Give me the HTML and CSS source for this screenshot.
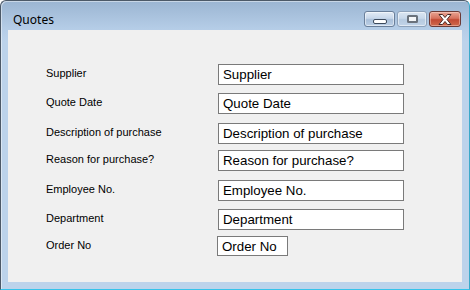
FILE: index.html
```html
<!DOCTYPE html>
<html>
<head>
<meta charset="utf-8">
<title>Quotes</title>
<link rel="stylesheet" href="styles.css">
</head>
<body>
<div class="window">
  <div class="titlebar">
    <span class="title">Quotes</span>
    <div class="caption-buttons">
      <div class="cbtn cbtn-min">
        <svg width="14" height="6" viewBox="0 0 14 6"><rect x="0.5" y="0.5" width="13" height="4" rx="1.5" fill="#fff" stroke="#3c4a5c"/></svg>
      </div>
      <div class="cbtn cbtn-max">
        <svg width="11" height="8" viewBox="0 0 11 8"><rect x="1" y="1" width="9" height="6" rx="0.5" fill="#f4f6f8" stroke="#6a727c" stroke-width="2"/></svg>
      </div>
      <div class="cbtn cbtn-close">
        <svg width="14" height="11" viewBox="0 0 14 11"><path d="M1 0.5 H4.5 L7 3.5 L9.5 0.5 H13 L9 5.5 L13 10.5 H9.5 L7 7.5 L4.5 10.5 H1 L5 5.5 Z" fill="#fff" stroke="#4a2a26" stroke-width="1" stroke-linejoin="round"/></svg>
      </div>
    </div>
  </div>
  <div class="client">
    <div class="form">
      <label class="lbl">Supplier</label>
      <input class="field" type="text" value="Supplier">
      <label class="lbl">Quote Date</label>
      <input class="field" type="text" value="Quote Date">
      <label class="lbl">Description of purchase</label>
      <input class="field" type="text" value="Description of purchase">
      <label class="lbl">Reason for purchase?</label>
      <input class="field" type="text" value="Reason for purchase?">
      <label class="lbl">Employee No.</label>
      <input class="field" type="text" value="Employee No.">
      <label class="lbl">Department</label>
      <input class="field" type="text" value="Department">
      <label class="lbl">Order No</label>
      <input class="field field-short" type="text" value="Order No">
    </div>
  </div>
</div>
</body>
</html>
```
FILE: styles.css
```css
html, body {
  margin: 0;
  padding: 0;
  background: #ffffff;
}
body {
  width: 470px;
  height: 290px;
  overflow: hidden;
}
.window {
  box-sizing: border-box;
  width: 470px;
  height: 290px;
  border: 1px solid #4c5968;
  border-right-color: #3aa9c9;
  border-bottom-color: #35c3ea;
  border-radius: 6px 6px 0 0;
  background: linear-gradient(to bottom, #9bb5d2 0px, #b5cde7 28px, #bcd3eb 40px, #bcd3eb 100%);
  box-shadow: inset 1px 1px 0 rgba(255,255,255,0.45);
  display: flex;
  flex-direction: column;
}
.titlebar {
  height: 29px;
  display: flex;
  align-items: flex-start;
  padding-left: 12px;
  padding-right: 8px;
}
.title {
  font-family: "Noto Sans", "Open Sans", sans-serif;
  font-size: 12px;
  line-height: 16px;
  padding-top: 11px;
  color: #000;
}
.caption-buttons {
  margin-left: auto;
  margin-top: 10px;
  display: flex;
  gap: 2px;
}
.cbtn {
  box-sizing: border-box;
  width: 31px;
  height: 16px;
  border: 1px solid #6a7f9a;
  border-radius: 3px;
  display: flex;
  align-items: center;
  justify-content: center;
  background: linear-gradient(to bottom, #e3ecf6 0%, #c7d7ea 45%, #a9bfd9 55%, #bccfe5 100%);
  box-shadow: inset 0 0 0 1px rgba(255,255,255,0.5);
}
.cbtn-min svg {
  margin-top: 5px;
}
.cbtn-max {
  width: 30px;
  border-color: #8ea2ba;
  background: linear-gradient(to bottom, #dbe6f2 0%, #c8d8ea 45%, #b6cae0 55%, #c2d4e8 100%);
}
.cbtn-close {
  width: 32px;
  border-color: #6b3a36;
  background: linear-gradient(to bottom, #e8a493 0%, #d7725e 45%, #c24a34 55%, #cf6a4c 100%);
  box-shadow: inset 0 0 0 1px rgba(255,220,210,0.45);
}
.client {
  flex: 1;
  margin: 0 7px 7px 7px;
  background: #f0f0f0;
}
.form {
  padding: 34px 0 0 38px;
  display: grid;
  grid-template-columns: 172px auto;
  grid-template-rows: 29px 30px 27px 30px 29px 27px 21px;
  justify-content: start;
  align-items: start;
}
.lbl {
  font-family: "Liberation Sans", Arial, sans-serif;
  font-size: 11px;
  line-height: 13px;
  padding-top: 2.5px;
  color: #000;
}
.field {
  box-sizing: border-box;
  width: 186px;
  height: 21px;
  margin: 0;
  padding: 0 4px;
  border: 1px solid #7a7a7a;
  border-radius: 0;
  background: #ffffff;
  font-family: "Liberation Sans", Arial, sans-serif;
  font-size: 13.3px;
  line-height: 19px;
  color: #000;
  outline: none;
}
.field-short {
  width: 71px;
  height: 20px;
  margin-left: -1px;
}
```
